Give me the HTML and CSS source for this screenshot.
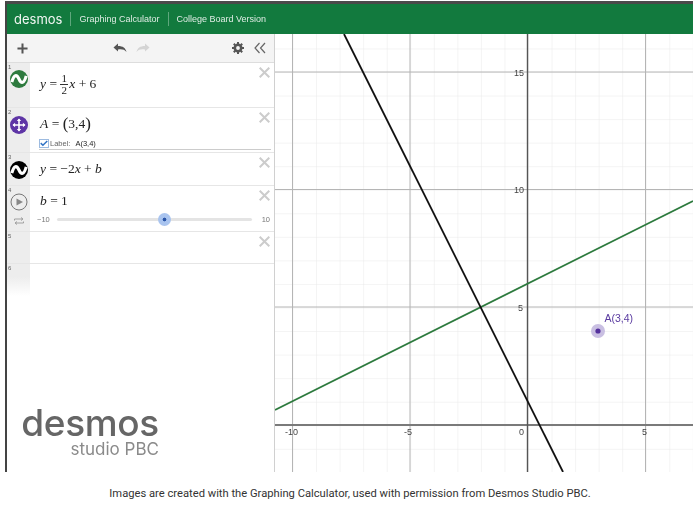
FILE: index.html
```html
<!DOCTYPE html>
<html lang="en">
<head>
<meta charset="utf-8">
<title>Desmos Graphing Calculator</title>
<link rel="stylesheet" href="styles.css">
</head>
<body>
<div class="frame">
  <header class="topbar">
    <span class="brand">desmos</span>
    <span class="sep"></span>
    <span class="title">Graphing Calculator</span>
    <span class="sep"></span>
    <span class="title">College Board Version</span>
  </header>
  <div class="app">
    <aside class="panel">
      <div class="tools">
        <svg class="ic-plus" width="11" height="11" viewBox="0 0 12 12"><path d="M6 0.500v11M0.500 6h11" stroke="#555" stroke-width="2.200"/></svg>
        <div class="undo">
          <svg width="14" height="10" viewBox="0 0 14 10"><path d="M0.500 4.500L5 0.500V3C10 3 12.500 5 13.500 9C11.500 6.500 9 6 5 6.500V8.500Z" fill="#555"/></svg>
          <svg width="14" height="10" viewBox="0 0 14 10"><path d="M13.500 4.500L9 0.500V3C4 3 1.500 5 0.500 9C2.500 6.500 5 6 9 6.500V8.500Z" fill="#d4d4d4"/></svg>
        </div>
        <svg class="ic-gear" width="12" height="12" viewBox="0 0 12 12"><circle cx="6" cy="6" r="3.200" fill="none" stroke="#555" stroke-width="2.600"/><path d="M6 0v2M6 10v2M0 6h2M10 6h2M1.800 1.800l1.400 1.400M8.800 8.800l1.400 1.400M10.200 1.800L8.800 3.200M3.200 8.800l-1.400 1.400" stroke="#555" stroke-width="2"/></svg>
        <svg class="ic-hide" width="12" height="12" viewBox="0 0 12 12"><path d="M5.500 1L1 6l4.500 5M11 1L6.500 6l4.500 5" fill="none" stroke="#666" stroke-width="1.200"/></svg>
      </div>

      <div class="row r1">
        <div class="gutter"><span class="num">1</span>
          <svg class="swatch" width="18" height="18" viewBox="0 0 20 20"><circle cx="10" cy="10" r="10" fill="#2d7a3e"/><path d="M2 13.500C4.500 4.500 7.500 4.500 10 10S15.500 15.500 18 6.500" fill="none" stroke="#fff" stroke-width="3.400"/></svg>
        </div>
        <div class="expr"><span class="math"><i>y</i> = <span class="frac"><span>1</span><span class="den">2</span></span> <i>x</i> + 6</span></div>
        <svg class="close" width="11" height="11" viewBox="0 0 11 11"><path d="M0.700 0.700l9.600 9.600M10.300 0.700l-9.600 9.600" stroke="#ccc" stroke-width="2"/></svg>
      </div>

      <div class="row r2">
        <div class="gutter"><span class="num">2</span>
          <svg class="swatch" width="18" height="18" viewBox="0 0 18 18"><circle cx="9" cy="9" r="9" fill="#5e35a5"/><path d="M9 3.200v11.600M3.200 9h11.600" stroke="#fff" stroke-width="1.600"/><path d="M9 2.500l2.200 2.600H6.800zM9 15.500l2.200-2.600H6.800zM2.500 9l2.600-2.200v4.400zM15.500 9l-2.600-2.200v4.400z" fill="#fff"/></svg>
        </div>
        <div class="expr stack">
          <span class="math point"><i>A</i> = <span class="paren">(</span>3,4<span class="paren">)</span></span>
          <div class="labelline">
            <span class="check"><svg width="11" height="9" viewBox="0 0 11 9"><path d="M1 4l3 3 6-6" fill="none" stroke="#2f72c4" stroke-width="2"/></svg></span>
            <span class="lab">Label:</span><span class="labval">A(3,4)</span>
          </div>
        </div>
        <svg class="close" width="11" height="11" viewBox="0 0 11 11"><path d="M0.700 0.700l9.600 9.600M10.300 0.700l-9.600 9.600" stroke="#ccc" stroke-width="2"/></svg>
      </div>

      <div class="row r3">
        <div class="gutter"><span class="num">3</span>
          <svg class="swatch" width="18" height="18" viewBox="0 0 20 20"><circle cx="10" cy="10" r="10" fill="#000"/><path d="M2 13.500C4.500 4.500 7.500 4.500 10 10S15.500 15.500 18 6.500" fill="none" stroke="#fff" stroke-width="3.400"/></svg>
        </div>
        <div class="expr"><span class="math"><i>y</i> = &minus;2<i>x</i> + <i>b</i></span></div>
        <svg class="close" width="11" height="11" viewBox="0 0 11 11"><path d="M0.700 0.700l9.600 9.600M10.300 0.700l-9.600 9.600" stroke="#ccc" stroke-width="2"/></svg>
      </div>

      <div class="row r4">
        <div class="gutter"><span class="num">4</span>
          <svg class="swatch" width="18" height="18" viewBox="0 0 18 18"><circle cx="9" cy="9" r="8" fill="none" stroke="#777" stroke-width="1"/><path d="M6.500 5.500L13 9l-6.500 3.500z" fill="#888"/></svg>
          <svg class="loop" width="10" height="8" viewBox="0 0 10 8"><path d="M0.500 3.500V2h8M7 0.500L9 2 7 3.500M9.500 4.500V6h-8M3 4.500L1 6l2 1.500" fill="none" stroke="#999" stroke-width="0.900"/></svg>
        </div>
        <div class="expr stack">
          <span class="math"><i>b</i> = 1</span>
          <div class="slider">
            <span class="end">&minus;10</span>
            <div class="track"><span class="thumb"></span></div>
            <span class="end end-r">10</span>
          </div>
        </div>
        <svg class="close" width="11" height="11" viewBox="0 0 11 11"><path d="M0.700 0.700l9.600 9.600M10.300 0.700l-9.600 9.600" stroke="#ccc" stroke-width="2"/></svg>
      </div>

      <div class="row r5">
        <div class="gutter"><span class="num">5</span></div>
        <div class="expr"></div>
        <svg class="close" width="11" height="11" viewBox="0 0 11 11"><path d="M0.700 0.700l9.600 9.600M10.300 0.700l-9.600 9.600" stroke="#ccc" stroke-width="2"/></svg>
      </div>

      <div class="row r6">
        <div class="gutter fade"><span class="num">6</span></div>
      </div>

      <div class="logo">
        <span class="logo-main">desmos</span>
        <span class="logo-sub">studio PBC</span>
      </div>
    </aside>

    <svg class="graph" width="418" height="438" viewBox="275 34 418 438">
      <defs>
        <pattern id="minor" x="292.500" y="72" width="23.550" height="23.550" patternUnits="userSpaceOnUse">
          <path d="M0 0V23.550M0 0H23.550" stroke="#e9e9e9" stroke-width="1" fill="none"/>
        </pattern>
      </defs>
      <rect x="275" y="34" width="418" height="438" fill="#fff"/>
      <rect x="275" y="34" width="418" height="438" fill="url(#minor)"/>
      <g stroke="#b5b5b5" stroke-width="1">
        <path d="M292.500 34V472M410 34V472M645.500 34V472"/>
        <path d="M275 72H693M275 189.500H693M275 307H693"/>
      </g>
      <path d="M275 425H693" stroke="#7a7a7a" stroke-width="1.800"/>
      <path d="M527.500 34V472" stroke="#555" stroke-width="1.400"/>
      <path d="M275 410L693 201" stroke="#2d7a3e" stroke-width="1.700"/>
      <path d="M344 34L563 472" stroke="#111" stroke-width="1.800"/>
      <circle cx="598" cy="331" r="7" fill="#c9bfe2"/>
      <circle cx="598" cy="331" r="2.600" fill="#54309c"/>
      <g class="ticks">
        <text x="514" y="75.500">15</text>
        <text x="514" y="193">10</text>
        <text x="518" y="310.500">5</text>
        <text x="285" y="435">-10</text>
        <text x="404" y="435">-5</text>
        <text x="519" y="435">0</text>
        <text x="642" y="435">5</text>
      </g>
      <text class="ptlabel" x="604.500" y="322">A(3,4)</text>
    </svg>
  </div>
</div>
<p class="caption">Images are created with the Graphing Calculator, used with permission from Desmos Studio PBC.</p>
</body>
</html>
```
FILE: styles.css
```css
* { box-sizing: border-box; }
html, body { margin: 0; padding: 0; background: #fff; }
body { width: 700px; height: 508px; overflow: hidden; padding-top: 1px; font-family: "Liberation Sans", Arial, sans-serif; }

.frame {
  margin-left: 5px;
  width: 688px;
  height: 471px;
  border-top: 3px solid #4a4a4a;
  border-left: 2px solid #444;
  display: flex;
  flex-direction: column;
  overflow: hidden;
  filter: blur(0.3px);
}
.topbar {
  height: 30px;
  flex: none;
  background: #127a3e;
  color: #dfece4;
  display: flex;
  align-items: center;
  padding-left: 7px;
}
.brand { font-family: "Inter", sans-serif; font-size: 13px; color: #f2f7f3; }
.sep { width: 1px; height: 14px; background: #5fa77d; margin: 0 8px; }
.title { font-family: "Liberation Sans", sans-serif; font-size: 9px; }

.app { display: flex; flex: 1; min-height: 0; }
.panel {
  width: 268px;
  flex: none;
  background: #fff;
  display: flex;
  flex-direction: column;
  border-right: 1px solid #d0d0d0;
  position: relative;
}
.tools {
  height: 29px;
  flex: none;
  background: #f4f4f4;
  border-bottom: 1px solid #ddd;
  display: flex;
  align-items: center;
  padding: 0 8px 0 10px;
}
.undo { margin-left: 85px; display: flex; gap: 9px; margin-right: 82px; }
.ic-gear { margin-right: 10px; }

.row { display: flex; flex: none; border-bottom: 1px solid #e6e6e6; position: relative; }
.r1 { height: 45px; }
.r2 { height: 45px; }
.r3 { height: 33px; }
.r4 { height: 46px; }
.r5 { height: 32px; }
.r6 { height: 32px; border-bottom: 0; }
.gutter {
  width: 23px;
  flex: none;
  background: #ededed;
  position: relative;
  display: flex;
  flex-direction: column;
  align-items: center;
}
.fade { background: linear-gradient(#ededed, #ededed 40%, #fff); }
.num { position: absolute; left: 1px; top: 1px; font-size: 6px; color: #666; }
.swatch { flex: none; margin-left: 1px; }
.r1 .swatch { margin-top: 7px; }
.r2 .swatch { margin-top: 8px; }
.r3 .swatch { margin-top: 8px; }
.r4 .swatch { margin-top: 7px; }
.loop { margin-top: 6px; }

.expr { flex: 1; padding-left: 10px; display: flex; align-items: center; min-width: 0; }
.r1 .expr { padding-bottom: 2px; }
.stack { flex-direction: column; align-items: flex-start; }
.math { font-family: "Liberation Serif", serif; font-size: 13.500px; color: #222; display: inline-block; white-space: pre-wrap; }
.frac { display: inline-flex; flex-direction: column; align-items: center; vertical-align: middle; font-size: 11px; line-height: 11px; margin: 0 -2px 0 0; }
.den { border-top: 1px solid #333; padding: 0 1px; }
.r2 .stack { padding-top: 7px; }
.point { font-size: 13.500px; line-height: 18px; }
.paren { font-size: 17px; font-weight: 300; line-height: 18px; vertical-align: -1px; }
.labelline { display: flex; align-items: center; margin-top: 5px; width: 232px; height: 12px; border-bottom: 1px solid #ccc; font-size: 7.500px; margin-left: -1px; padding-bottom: 1px; }
.check { width: 10px; height: 9px; border: 1px solid #9dbbe0; display: flex; align-items: center; margin-right: 1px; }
.lab { color: #666; margin-right: 5px; }
.labval { color: #222; }
.r3 .expr { padding-bottom: 1px; }
.r4 .stack { padding-top: 7px; }
.r4 .math { line-height: 15px; }
.slider { display: flex; align-items: center; width: 233px; margin-left: -3px; margin-top: 7px; color: #777; font-size: 7.500px; }
.end { width: 20px; flex: none; }
.end-r { text-align: right; }
.track { flex: 1; height: 3px; background: #e4e4e4; border-radius: 2px; position: relative; margin-right: -2px; }
.thumb {
  position: absolute;
  left: 101px;
  top: -5px;
  width: 13px;
  height: 13px;
  border-radius: 50%;
  background: radial-gradient(circle, #2a55a8 0 1.600px, #a9c4ef 2.200px);
}
.close { position: absolute; right: 4px; top: 4px; }

.logo {
  position: absolute;
  left: 16px;
  bottom: 14px;
  width: 136px;
  display: flex;
  flex-direction: column;
  align-items: flex-end;
  gap: 3px;
  color: #666;
}
.logo-main { font-family: "Inter", sans-serif; font-size: 37px; font-weight: 500; line-height: 30px; letter-spacing: -0.3px; }
.logo-sub { font-family: "Inter", sans-serif; font-size: 17px; color: #8a8a8a; line-height: 17px; }

.graph { display: block; flex: none; }
.ticks text { font-family: "Liberation Sans", sans-serif; font-size: 9px; fill: #444; }
.ptlabel { font-family: "Liberation Sans", sans-serif; font-size: 10.500px; fill: #5a3ba0; }

.caption {
  margin: 15px 0 0;
  text-align: center;
  font-family: "Roboto", sans-serif;
  font-size: 11.200px;
  line-height: 14px;
  color: #333;
}
```
